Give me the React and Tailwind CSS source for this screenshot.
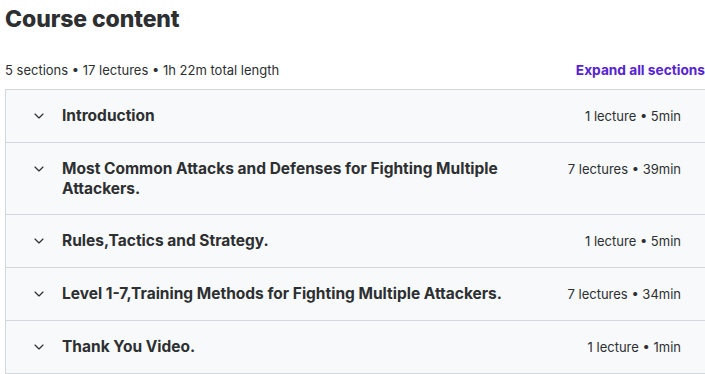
import { ChevronDown } from 'lucide-react'

const sections = [
  { title: 'Introduction', meta: '1 lecture • 5min' },
  { title: 'Most Common Attacks and Defenses for Fighting Multiple Attackers.', meta: '7 lectures • 39min' },
  { title: 'Rules,Tactics and Strategy.', meta: '1 lecture • 5min' },
  { title: 'Level 1-7,Training Methods for Fighting Multiple Attackers.', meta: '7 lectures • 34min' },
  { title: 'Thank You Video.', meta: '1 lecture • 1min' },
]

export default function App() {
  return (
    <div className="w-[705px] h-[374px] bg-white overflow-hidden text-[#2d2f31]" style={{ fontFamily: 'Inter, "Noto Sans", sans-serif' }}>
      <h2 className="pl-[5px] pt-[4px] text-[23px] font-extrabold leading-[30px] tracking-[-0.1px]">Course content</h2>
      <div className="flex items-end justify-between pl-[5px] pt-[28px] pb-[11px]">
        <span className="text-[13px] leading-[16px]">5 sections • 17 lectures • 1h 22m total length</span>
        <button className="text-[13.7px] font-bold leading-[16px] text-[#5624d0]">Expand all sections</button>
      </div>
      <div className="ml-[5px] w-[702px] border border-[#d1d7dc]">
        {sections.map((s, i) => (
          <div key={i} className={`flex items-start bg-[#f7f9fa] pl-[25px] pr-[25px] py-[16px] ${i > 0 ? 'border-t border-[#d1d7dc]' : ''}`}>
            <ChevronDown size={16} strokeWidth={1.75} className="mt-[2px] mr-[15px] text-[#2d2f31] shrink-0" />
            <div className="flex-1 text-[15.5px] font-bold leading-[19.5px] pr-[40px]">{s.title}</div>
            <div className="text-[13px] leading-[20px] shrink-0 whitespace-nowrap">{s.meta}</div>
          </div>
        ))}
      </div>
    </div>
  )
}
